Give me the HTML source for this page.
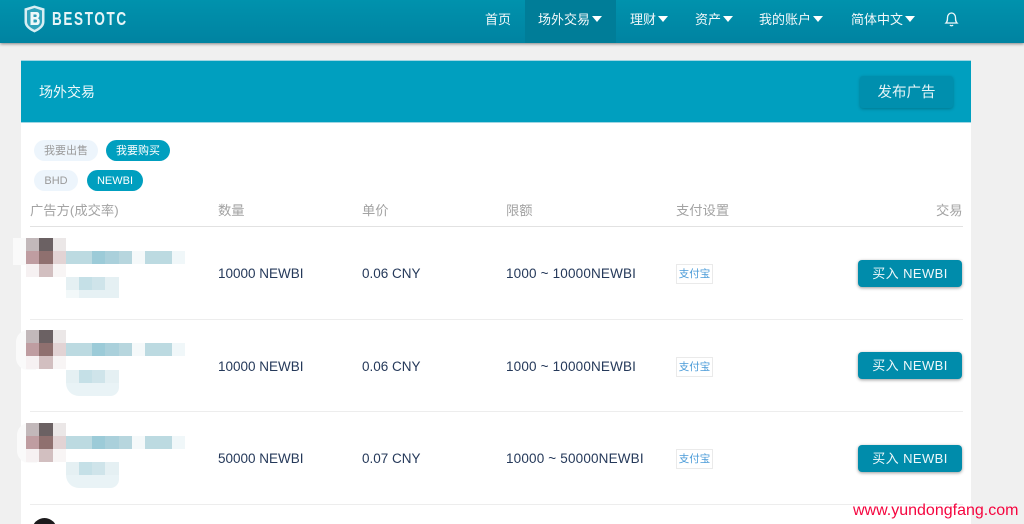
<!DOCTYPE html>
<html lang="zh"><head><meta charset="utf-8"><style>
*{box-sizing:border-box}
html,body{margin:0;padding:0;width:1024px;height:524px;overflow:hidden;background:#f0f0f0;font-family:"Liberation Sans","Noto Sans CJK SC",sans-serif}
#w{position:relative;width:1024px;height:524px;overflow:hidden;background:#f0f0f0}
.a{position:absolute;white-space:nowrap}
.nav{left:0;top:0;width:1024px;height:43px;background:linear-gradient(#0092ad,#0083a1);box-shadow:0 1px 3px rgba(0,0,0,.45)}
.n{top:10px;color:#f2f8fa;font-size:13px;line-height:19px}
.c{display:inline-block;width:0;height:0;border:5px solid transparent;border-top:6px solid #fff;border-bottom:0;margin-left:2px;vertical-align:2px}
.card{left:21px;top:61px;width:950px;height:463px;background:#fff}
.hd{left:21px;top:60px;width:950px;height:63px;background:#009fbf;border-top:1px solid #9fd6e3;border-bottom:1px solid #9fd6e3}
.pill{height:21px;border-radius:11px;font-size:11px;line-height:23px;text-align:center}
.off{background:#edf5fc;color:#9a9a9a}.on{background:#009fbf;color:#fff}
.th{top:202px;font-size:13.3px;line-height:18px;color:#a3a3a3}
.line{left:30px;width:933px;height:1px;background:#ededed}
.t{font-size:13.5px;line-height:18px;color:#25395a}
.r{letter-spacing:.17px}
.ali{left:676px;width:37px;height:20px;border:1px solid #eaeaea;color:#4a9bd8;font-size:10.5px;line-height:18px;text-align:center}
.buy{left:858px;width:104px;height:27px;background:#008cab;border-radius:4px;color:#eef8fa;font-size:13px;line-height:27px;text-align:center;box-shadow:0 1px 3px rgba(0,0,0,.4);letter-spacing:.4px}
.m{position:absolute}
</style></head><body><div id="w">
<div class="a nav"></div>
<div class="a" style="left:525px;top:0;width:91px;height:43px;background:#007d98"></div>
<svg class="a" style="left:24px;top:5px" width="22" height="28" viewBox="0 0 22 28"><path d="M10.5 0.5L20.5 3.5V17C20.5 22 15 25.500 10.500 27.500C6 25.500 .5 22 .5 17V3.500Z" fill="#d8eef3"/><path d="M10.5 3L18 5.500V16.500C18 20.500 14 23.200 10.500 24.800C7 23.200 3 20.500 3 16.500V5.500Z" fill="#2fa3bb"/><path d="M6.500 7H13C16 7 16 12.600 13.800 13.200C16.600 13.800 16.600 20 13 20H6.500Z" fill="#eef8fa"/><path d="M9.500 9.500H11.800C13 9.500 13 12 11.800 12H9.500ZM9.500 14.500H12C13.400 14.500 13.400 17.500 12 17.500H9.500Z" fill="#2b9db6"/></svg>
<div class="a" style="left:52px;top:9px;color:#e6f4f7;font-size:18px;line-height:20px;font-weight:700;letter-spacing:2.2px;transform-origin:0 50%;transform:scaleX(.75)">BESTOTC</div>
<div class="a n" style="left:485px">首页</div>
<div class="a n" style="left:538px">场外交易<i class="c"></i></div>
<div class="a n" style="left:630px">理财<i class="c"></i></div>
<div class="a n" style="left:695px">资产<i class="c"></i></div>
<div class="a n" style="left:759px">我的账户<i class="c"></i></div>
<div class="a n" style="left:851px">简体中文<i class="c"></i></div>
<svg class="a" style="left:944px;top:11px" width="15" height="16" viewBox="0 0 15 16" fill="none" stroke="#f0f8fa" stroke-width="1.3"><path d="M2 12C3.500 10.500 3.500 9 3.500 6.500C3.500 4 5.300 2 7.500 2S11.500 4 11.500 6.500C11.500 9 11.500 10.500 13 12Z"/><path d="M6 14C6.600 15 8.400 15 9 14"/></svg>

<div class="a card"></div>
<div class="a hd"></div>
<div class="a" style="left:39px;top:83px;color:#eef8fa;font-size:14px;line-height:18px">场外交易</div>
<div class="a" style="left:860px;top:76px;width:93px;height:32px;background:#008fae;border-radius:3px;color:#e6f4f7;font-size:14.500px;line-height:35px;text-align:center;box-shadow:0 1px 3px rgba(0,0,0,.25)">发布广告</div>

<div class="a pill off" style="left:34px;top:140px;width:64px">我要出售</div>
<div class="a pill on" style="left:106px;top:140px;width:64px">我要购买</div>
<div class="a pill off" style="left:34px;top:170px;width:44px">BHD</div>
<div class="a pill on" style="left:87px;top:170px;width:56px">NEWBI</div>

<div class="a th" style="left:30px">广告方(成交率)</div>
<div class="a th" style="left:218px">数量</div>
<div class="a th" style="left:362px">单价</div>
<div class="a th" style="left:506px">限额</div>
<div class="a th" style="left:676px">支付设置</div>
<div class="a th" style="left:936px">交易</div>
<div class="a line" style="top:226px;background:#e2e2e2"></div>
<div class="a line" style="top:319px"></div>
<div class="a line" style="top:411px"></div>
<div class="a line" style="top:504px"></div>

<!-- row 1 -->
<div class="a" style="left:0;top:0">
<div class="m" style="left:13px;top:238px;width:13px;height:27px;background:#fafafa"></div>
<div class="m" style="left:26px;top:238px;width:13px;height:13px;background:#c2b8ba"></div><div class="m" style="left:39px;top:238px;width:14px;height:13px;background:#6b6163"></div><div class="m" style="left:53px;top:238px;width:13px;height:13px;background:#ebe7e7"></div>
<div class="m" style="left:26px;top:251px;width:13px;height:13px;background:#bf9da1"></div><div class="m" style="left:39px;top:251px;width:14px;height:13px;background:#8f706f"></div><div class="m" style="left:53px;top:251px;width:13px;height:13px;background:#e2d3d4"></div>
<div class="m" style="left:26px;top:264px;width:13px;height:13px;background:#f6f1f2"></div><div class="m" style="left:39px;top:264px;width:14px;height:13px;background:#d2bfc0"></div><div class="m" style="left:53px;top:264px;width:13px;height:13px;background:#f8f5f5"></div>
<div class="m" style="left:66px;top:251px;width:26px;height:13px;background:#bcdae1"></div><div class="m" style="left:92px;top:251px;width:13px;height:13px;background:#9ccbd8"></div><div class="m" style="left:105px;top:251px;width:14px;height:13px;background:#aad0db"></div><div class="m" style="left:119px;top:251px;width:13px;height:13px;background:#b7d6de"></div><div class="m" style="left:132px;top:251px;width:13px;height:13px;background:#f5f9fa"></div><div class="m" style="left:145px;top:251px;width:27px;height:13px;background:#bcdae1"></div><div class="m" style="left:172px;top:251px;width:13px;height:13px;background:#f0f7f9"></div>
<div class="m" style="left:66px;top:277px;width:13px;height:13px;background:#e5f0f3"></div><div class="m" style="left:79px;top:277px;width:13px;height:13px;background:#c5e0e7"></div><div class="m" style="left:92px;top:277px;width:13px;height:13px;background:#cfe4ea"></div><div class="m" style="left:105px;top:277px;width:14px;height:13px;background:#e5f0f3"></div>
<div class="m" style="left:66px;top:290px;width:13px;height:8px;background:#f2f8f9"></div><div class="m" style="left:79px;top:290px;width:40px;height:8px;background:#e6f1f4"></div>
</div>
<!-- row 2 -->
<div class="a" style="left:0;top:92px">
<div class="m" style="left:16px;top:238px;width:20px;height:40px;border-radius:12px 0 0 12px;background:#fafafa"></div>
<div class="m" style="left:26px;top:238px;width:13px;height:13px;background:#c2b8ba"></div><div class="m" style="left:39px;top:238px;width:14px;height:13px;background:#6b6163"></div><div class="m" style="left:53px;top:238px;width:13px;height:13px;background:#ebe7e7"></div>
<div class="m" style="left:26px;top:251px;width:13px;height:13px;background:#bf9da1"></div><div class="m" style="left:39px;top:251px;width:14px;height:13px;background:#8f706f"></div><div class="m" style="left:53px;top:251px;width:13px;height:13px;background:#e2d3d4"></div>
<div class="m" style="left:26px;top:264px;width:13px;height:13px;background:#f6f1f2"></div><div class="m" style="left:39px;top:264px;width:14px;height:13px;background:#d2bfc0"></div><div class="m" style="left:53px;top:264px;width:13px;height:13px;background:#f8f5f5"></div>
<div class="m" style="left:66px;top:251px;width:26px;height:13px;background:#bcdae1"></div><div class="m" style="left:92px;top:251px;width:13px;height:13px;background:#9ccbd8"></div><div class="m" style="left:105px;top:251px;width:14px;height:13px;background:#aad0db"></div><div class="m" style="left:119px;top:251px;width:13px;height:13px;background:#b7d6de"></div><div class="m" style="left:132px;top:251px;width:13px;height:13px;background:#f5f9fa"></div><div class="m" style="left:145px;top:251px;width:27px;height:13px;background:#bcdae1"></div><div class="m" style="left:172px;top:251px;width:13px;height:13px;background:#f0f7f9"></div>
<div class="m" style="left:66px;top:278px;width:13px;height:13px;background:#e5f0f3"></div><div class="m" style="left:79px;top:278px;width:13px;height:13px;background:#c5e0e7"></div><div class="m" style="left:92px;top:278px;width:13px;height:13px;background:#cfe4ea"></div><div class="m" style="left:105px;top:278px;width:14px;height:13px;background:#e5f0f3"></div>
<div class="m" style="left:66px;top:291px;width:53px;height:13px;background:#e9f3f6;border-radius:0 0 12px 18px"></div>
</div>
<!-- row 3 -->
<div class="a" style="left:0;top:185px">
<div class="m" style="left:17px;top:238px;width:20px;height:40px;border-radius:12px 0 0 12px;background:#fafafa"></div>
<div class="m" style="left:26px;top:238px;width:13px;height:13px;background:#c2b8ba"></div><div class="m" style="left:39px;top:238px;width:14px;height:13px;background:#6b6163"></div><div class="m" style="left:53px;top:238px;width:13px;height:13px;background:#ebe7e7"></div>
<div class="m" style="left:26px;top:251px;width:13px;height:13px;background:#bf9da1"></div><div class="m" style="left:39px;top:251px;width:14px;height:13px;background:#8f706f"></div><div class="m" style="left:53px;top:251px;width:13px;height:13px;background:#e2d3d4"></div>
<div class="m" style="left:26px;top:264px;width:13px;height:13px;background:#f6f1f2"></div><div class="m" style="left:39px;top:264px;width:14px;height:13px;background:#d2bfc0"></div><div class="m" style="left:53px;top:264px;width:13px;height:13px;background:#f8f5f5"></div>
<div class="m" style="left:66px;top:251px;width:26px;height:13px;background:#bcdae1"></div><div class="m" style="left:92px;top:251px;width:13px;height:13px;background:#9ccbd8"></div><div class="m" style="left:105px;top:251px;width:14px;height:13px;background:#aad0db"></div><div class="m" style="left:119px;top:251px;width:13px;height:13px;background:#b7d6de"></div><div class="m" style="left:132px;top:251px;width:13px;height:13px;background:#f5f9fa"></div><div class="m" style="left:145px;top:251px;width:27px;height:13px;background:#bcdae1"></div><div class="m" style="left:172px;top:251px;width:13px;height:13px;background:#f0f7f9"></div>
<div class="m" style="left:66px;top:277px;width:13px;height:13px;background:#e5f0f3"></div><div class="m" style="left:79px;top:277px;width:13px;height:13px;background:#c5e0e7"></div><div class="m" style="left:92px;top:277px;width:13px;height:13px;background:#cfe4ea"></div><div class="m" style="left:105px;top:277px;width:14px;height:13px;background:#e5f0f3"></div>
<div class="m" style="left:66px;top:290px;width:53px;height:13px;background:#e9f3f6;border-radius:0 0 12px 18px"></div>
</div>

<div class="a t" style="left:218px;top:265px">10000 NEWBI</div>
<div class="a t" style="left:362px;top:265px">0.06 CNY</div>
<div class="a t r" style="left:506px;top:265px">1000 ~ 10000NEWBI</div>
<div class="a ali" style="top:264px">支付宝</div>
<div class="a buy" style="top:260px">买入 NEWBI</div>

<div class="a t" style="left:218px;top:358px">10000 NEWBI</div>
<div class="a t" style="left:362px;top:358px">0.06 CNY</div>
<div class="a t r" style="left:506px;top:358px">1000 ~ 10000NEWBI</div>
<div class="a ali" style="top:357px">支付宝</div>
<div class="a buy" style="top:352px">买入 NEWBI</div>

<div class="a t" style="left:218px;top:450px">50000 NEWBI</div>
<div class="a t" style="left:362px;top:450px">0.07 CNY</div>
<div class="a t r" style="left:506px;top:450px">10000 ~ 50000NEWBI</div>
<div class="a ali" style="top:449px">支付宝</div>
<div class="a buy" style="top:445px">买入 NEWBI</div>

<div class="a" style="left:32px;top:518px;width:25px;height:25px;border-radius:50%;background:#1c1a1c"></div>
<div class="a" style="left:853px;top:501px;color:#f5053f;font-size:16px;line-height:20px">www.yundongfang.com</div>
</div></body></html>
